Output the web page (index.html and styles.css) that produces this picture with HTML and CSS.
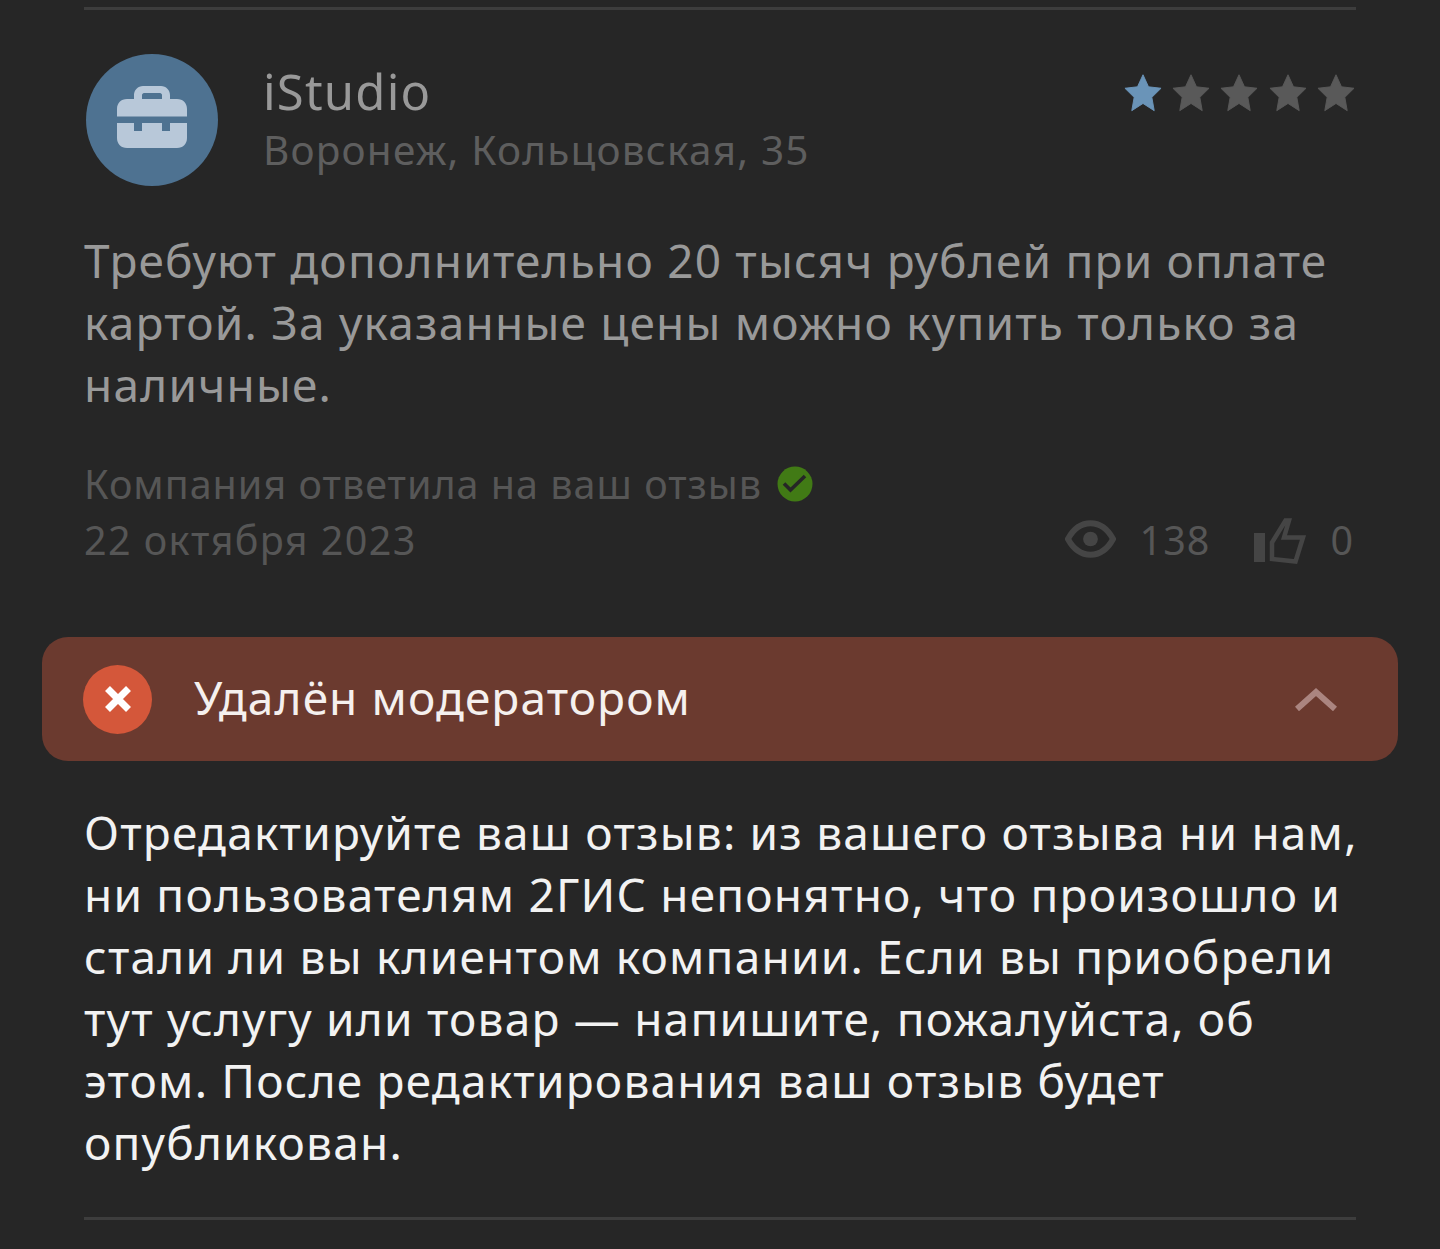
FILE: index.html
```html
<!DOCTYPE html>
<html lang="ru">
<head>
    <meta charset="UTF-8">
    <meta name="viewport" content="width=device-width, initial-scale=1.0">
    <title>Отзыв</title>
    <link rel="stylesheet" href="styles.css">
</head>
<body>
    <div class="review">
        <div class="review-head">
            <div class="avatar">
                <svg width="70" height="62" viewBox="0 0 70 62">
                    <path fill="#b8c8d9" fill-rule="evenodd" d="M17 13V9c0-5 4-9 9-9h18c5 0 9 4 9 9v4h7c6 0 10 4 10 10v7.5H0V23c0-6 4-10 10-10h7zm8 0h20V9c0-1-1-2-2-2H27c-1 0-2 1-2 2z"/>
                    <path fill="#b8c8d9" d="M0 37h17v8h8v-8h20v8h8v-8h17v15c0 6-4 10-10 10H10C4 62 0 58 0 52z"/>
                </svg>
            </div>
            <div class="author">
                <div class="author-name">iStudio</div>
                <div class="author-place">Воронеж, Кольцовская, 35</div>
            </div>
            <div class="stars">
                <svg class="star star-on" viewBox="0 0 40 40"><path d="M20 .8l5.800 12.700L39 15l-9.700 9.600L31.800 38.600 20 31 8.200 38.600l2.500-14L1 15l13.200-1.500z"/></svg>
                <svg class="star" viewBox="0 0 40 40"><path d="M20 .8l5.800 12.700L39 15l-9.700 9.600L31.800 38.600 20 31 8.200 38.600l2.500-14L1 15l13.200-1.500z"/></svg>
                <svg class="star" viewBox="0 0 40 40"><path d="M20 .8l5.800 12.700L39 15l-9.700 9.600L31.800 38.600 20 31 8.200 38.600l2.500-14L1 15l13.200-1.500z"/></svg>
                <svg class="star" viewBox="0 0 40 40"><path d="M20 .8l5.800 12.700L39 15l-9.700 9.600L31.800 38.600 20 31 8.200 38.600l2.500-14L1 15l13.200-1.500z"/></svg>
                <svg class="star" viewBox="0 0 40 40"><path d="M20 .8l5.800 12.700L39 15l-9.700 9.600L31.800 38.600 20 31 8.200 38.600l2.500-14L1 15l13.200-1.500z"/></svg>
            </div>
        </div>

        <p class="review-text">Требуют дополнительно 20 тысяч рублей при оплате<br>картой. За указанные цены можно купить только за<br>наличные.</p>

        <div class="review-foot">
            <div class="meta">
                <div class="answered">
                    Компания ответила на ваш отзыв
                    <svg class="check" width="36" height="36" viewBox="0 0 36 36">
                        <circle cx="18" cy="18" r="17.5" fill="#417a15"/>
                        <path d="M7 17.500l6.500 6.500L28 10" fill="none" stroke="#262626" stroke-width="3.6"/>
                    </svg>
                </div>
                <div class="date">22 октября 2023</div>
            </div>
            <div class="counters">
                <svg class="eye" width="51" height="38" viewBox="0 0 52 38">
                    <path d="M3 19C9 8 16 3 26 3s17 5 23 16c-6 11-13 16-23 16S9 30 3 19z" fill="none" stroke="#454545" stroke-width="6"/>
                    <circle cx="26" cy="19" r="7.5" fill="#454545"/>
                </svg>
                <span class="count">138</span>
                <svg class="thumb" width="52" height="48" viewBox="0 0 52 48">
                    <path d="M0 17h11v29H0z" fill="#454545"/>
                    <path d="M18 43V26.500L31.500 4.500h3.500L30 21.500h19l-7.500 24z" fill="none" stroke="#454545" stroke-width="4.5"/>
                </svg>
                <span class="count">0</span>
            </div>
        </div>
    </div>

    <div class="moderation">
        <div class="moderation-icon">
            <svg width="30" height="30" viewBox="0 0 30 30">
                <path d="M4.500 4.500l21 21M25.500 4.500l-21 21" stroke="#fff" stroke-width="7"/>
            </svg>
        </div>
        <div class="moderation-title">Удалён модератором</div>
        <svg class="chevron" width="42" height="24" viewBox="0 0 42 24">
            <path d="M2 22L21 5l19 17" fill="none" stroke="#ab8580" stroke-width="6"/>
        </svg>
    </div>

    <p class="moderation-text">Отредактируйте ваш отзыв: из вашего отзыва ни нам,<br>ни пользователям 2ГИС непонятно, что произошло и<br>стали ли вы клиентом компании. Если вы приобрели<br>тут услугу или товар — напишите, пожалуйста, об<br>этом. После редактирования ваш отзыв будет<br>опубликован.</p>

    <div class="bottom-line"></div>
</body>
</html>
```

FILE: styles.css
```css
body {
    margin: 0;
    height: 1249px;
    overflow: hidden;
    background-color: #262626;
    font-family: "Noto Sans", sans-serif;
    color: #fff;
}
.review {
    margin: 7px 84px 0;
    padding-top: 44px;
    border-top: 3px solid #3d3d3d;
}
.review-head {
    display: flex;
    align-items: flex-start;
}
.avatar {
    width: 132px;
    height: 132px;
    margin-left: 2px;
    padding-bottom: 6px;
    box-sizing: border-box;
    border-radius: 50%;
    background-color: #4e7291;
    display: flex;
    align-items: center;
    justify-content: center;
    flex-shrink: 0;
}
.author {
    margin-left: 45px;
    flex: 1;
}
.author-name {
    font-size: 49px;
    line-height: 56px;
    margin-top: 9px;
    letter-spacing: 1.2px;
    color: #999;
}
.author-place {
    font-size: 40.5px;
    line-height: 52px;
    margin-top: 5px;
    letter-spacing: 1.2px;
    color: #5e5e5e;
}
.stars {
    display: flex;
    gap: 10.3px;
    margin-top: 20px;
    margin-right: 1px;
}
.star {
    width: 38px;
    height: 38px;
    fill: #595959;
    stroke: #595959;
    stroke-width: 1;
    stroke-linejoin: round;
}
.star-on {
    fill: #6a94b8;
    stroke: #6a94b8;
}
.review-text {
    margin: 43px 0 0;
    font-size: 46px;
    line-height: 62px;
    letter-spacing: 1.2px;
    color: #999;
}
.review-foot {
    display: flex;
    justify-content: space-between;
    align-items: flex-end;
    margin-top: 42px;
}
.meta {
    font-size: 39.5px;
    line-height: 54px;
    letter-spacing: 1px;
    color: #565656;
}
.answered {
    display: flex;
    align-items: center;
    gap: 15px;
}
.date {
    margin-top: 2px;
    letter-spacing: 1.4px;
}
.counters {
    display: flex;
    align-items: center;
    font-size: 39.5px;
    line-height: 54px;
    letter-spacing: 1px;
    color: #565656;
    margin-right: 2px;
}
.eye { margin-bottom: 2px; }
.count { margin-left: 24px; }
.thumb { margin-left: 44px; }
.moderation {
    display: flex;
    align-items: center;
    height: 124px;
    margin: 70px 42px 0;
    padding: 0 61px 0 41px;
    border-radius: 26px;
    background-color: #6b3a2f;
}
.moderation-icon {
    width: 69px;
    height: 69px;
    border-radius: 50%;
    background-color: #d4573a;
    display: flex;
    align-items: center;
    justify-content: center;
}
.moderation-title {
    flex: 1;
    margin-left: 42px;
    padding-bottom: 4px;
    font-size: 46px;
    letter-spacing: 1.1px;
    color: #f5f0ee;
}
.moderation-text {
    margin: 40px 0 0 84px;
    font-size: 46px;
    line-height: 62px;
    letter-spacing: 1.2px;
    white-space: nowrap;
    color: #f2f2f2;
}
.bottom-line {
    margin: 44px 84px 0;
    height: 3px;
    background-color: #3d3d3d;
}
```
